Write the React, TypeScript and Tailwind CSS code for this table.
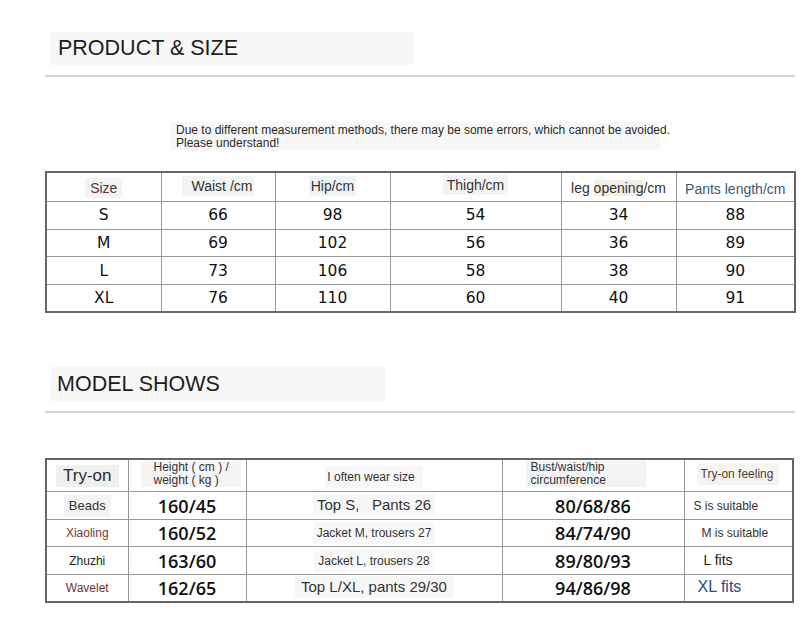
import React from "react";

const sans = { fontFamily: '"Liberation Sans", Arial, sans-serif' };

function Bg({ className = "", children }: { className?: string; children: React.ReactNode }) {
  return <span className={`inline-block ${className}`}>{children}</span>;
}

const sizeRows = [
  ["S", "66", "98", "54", "34", "88"],
  ["M", "69", "102", "56", "36", "89"],
  ["L", "73", "106", "58", "38", "90"],
  ["XL", "76", "110", "60", "40", "91"],
];

const numFont = { fontFamily: '"Open Sans", "Liberation Sans", sans-serif', fontWeight: 600, fontSize: 18 };

export default function App() {
  return (
    <div className="w-[802px] h-[637px] bg-white overflow-hidden text-[#222]" style={sans}>
      <div className="pl-[45px] pt-[32px]">
        {/* PRODUCT & SIZE */}
        <div className="ml-[5px] w-[363px] h-[33px] bg-[#f7f7f7] flex items-center pl-[8px] text-[21.5px] leading-none text-[#1e1e1e]">
          PRODUCT &amp; SIZE
        </div>
        <div className="mt-[10px] w-[750px] h-[2px] bg-[#d6d6d6]" />

        <div className="mt-[45px] ml-[125px] w-[490px] h-[28px] bg-[#f7f7f7] pl-[6px] pt-[2px] text-[12px] leading-[13px] text-[#2a2a2a] whitespace-nowrap">
          Due to different measurement methods, there may be some errors, which cannot be avoided.
          <br />
          Please understand!
        </div>

        {/* Size table */}
        <table className="mt-[21px] w-[749px] table-fixed border-collapse border-2 border-[#666]">
          <colgroup>
            <col className="w-[115px]" />
            <col className="w-[114px]" />
            <col className="w-[115px]" />
            <col className="w-[171px]" />
            <col className="w-[115px]" />
            <col className="w-[119px]" />
          </colgroup>
          <tbody>
            <tr className="h-[27.7px]">
              <td className="border border-[#999] text-center align-top pt-[3px]">
                <Bg className="bg-[#f5f4f4] px-[5px] text-[14px] leading-[20px] text-[#6a2c2c]">Size</Bg>
              </td>
              <td className="border border-[#999] text-center align-top pt-[1px]">
                <Bg className="bg-[#f2f5f2] pl-[10px] pr-[2px] text-[14px] leading-[20px] text-[#333]">Waist /cm</Bg>
              </td>
              <td className="border border-[#999] text-center align-top pt-[1px]">
                <Bg className="bg-[#eef3f8] px-[2px] text-[14px] leading-[20px] text-[#333]">Hip/cm</Bg>
              </td>
              <td className="border border-[#999] text-center align-top pt-[0px]">
                <Bg className="bg-[#f3f3f3] px-[4px] text-[14px] leading-[20px] text-[#333]">Thigh/cm</Bg>
              </td>
              <td className="border border-[#999] text-center align-top pt-[3px]">
                <span className="text-[14px] leading-[20px] text-[#333]">
                  leg <span className="bg-[#f1eee8]">opening</span>/cm
                </span>
              </td>
              <td className="border border-[#999] text-center align-top pt-[4px] whitespace-nowrap">
                <span className="text-[14px] leading-[20px] text-[#3a5583]">Pants length/cm</span>
              </td>
            </tr>
            {sizeRows.map((r, i) => (
              <tr key={i} className="h-[27.7px]">
                {r.map((c, j) => (
                  <td
                    key={j}
                    className="border border-[#999] text-center leading-[20px] text-[#111]"
                    style={{ fontFamily: '"DejaVu Sans", Verdana, sans-serif', fontSize: 15.5 }}
                  >
                    {c}
                  </td>
                ))}
              </tr>
            ))}
          </tbody>
        </table>

        {/* MODEL SHOWS */}
        <div className="mt-[54px] ml-[5px] w-[335px] h-[34px] bg-[#f7f7f7] flex items-center pl-[7px] text-[21.5px] leading-none text-[#1e1e1e]">
          MODEL SHOWS
        </div>
        <div className="mt-[10px] w-[750px] h-[2px] bg-[#d6d6d6]" />

        {/* Model table */}
        <table className="mt-[45px] w-[747px] table-fixed border-collapse border-2 border-[#666]">
          <colgroup>
            <col className="w-[82px]" />
            <col className="w-[118px]" />
            <col className="w-[256px]" />
            <col className="w-[182px]" />
            <col className="w-[109px]" />
          </colgroup>
          <tbody>
            <tr className="h-[28.5px]">
              <td className="border border-[#999] text-center">
                <Bg className="bg-[#eef0f0] px-[7px] text-[17px] leading-[22px] text-[#2a2a2a]">Try-on</Bg>
              </td>
              <td className="border border-[#999] align-top pt-[1px] pl-[12px]">
                <Bg className="bg-[#f5f5f5] pl-[13px] pr-[12px] text-[12px] leading-[13px] text-[#333] whitespace-nowrap">
                  Height ( cm ) /
                  <br />
                  weight ( kg )
                </Bg>
              </td>
              <td className="border border-[#999] text-center">
                <Bg className="bg-[#f7f7f7] pl-[2px] pr-[8px] text-[12px] leading-[22px] text-[#333]">I often wear size</Bg>
              </td>
              <td className="border border-[#999] align-top pt-[1px] pl-[23px]">
                <Bg className="bg-[#f2f4f4] pl-[5px] pr-[40px] text-[12px] leading-[13px] text-[#333] whitespace-nowrap">
                  Bust/waist/hip
                  <br />
                  circumference
                </Bg>
              </td>
              <td className="border border-[#999] align-top pt-[1px] pl-[12px]">
                <Bg className="bg-[#f6f4f1] pl-[4px] pr-[6px] text-[12px] leading-[22px] text-[#5a3a2c] whitespace-nowrap">Try-on feeling</Bg>
              </td>
            </tr>
            {[
              {
                name: "Beads",
                nameCls: "text-[13px] text-[#333] bg-[#f3f3f3] px-[5px]",
                hw: "160/45",
                wear: "Top S,\u00a0\u00a0\u00a0Pants 26",
                wearCls: "text-[15px] bg-[#f7f7f7] px-[4px]",
                bust: "80/68/86",
                feel: "S is suitable",
                feelCls: "text-[12px] text-[#333] pl-[9px]",
              },
              {
                name: "Xiaoling",
                nameCls: "text-[12px] text-[#7a3535]",
                hw: "160/52",
                wear: "Jacket M, trousers 27",
                wearCls: "text-[12px] bg-[#f8f8f8] px-[4px] -mt-[4px]",
                bust: "84/74/90",
                feel: "M is suitable",
                feelCls: "text-[12px] text-[#333] pl-[17px]",
              },
              {
                name: "Zhuzhi",
                nameCls: "text-[12px] text-[#222]",
                hw: "163/60",
                wear: "Jacket L, trousers 28",
                wearCls: "text-[12px] bg-[#f8f8f8] px-[4px]",
                bust: "89/80/93",
                feel: "L fits",
                feelCls: "text-[14px] text-[#222] pl-[19px]",
              },
              {
                name: "Wavelet",
                nameCls: "text-[12px] text-[#6b3535]",
                hw: "162/65",
                wear: "Top L/XL, pants 29/30",
                wearCls: "text-[15px] bg-[#f7f7f7] px-[6px]",
                bust: "94/86/98",
                feel: "XL fits",
                feelCls: "text-[16px] text-[#2d4a86] pl-[13px]",
              },
            ].map((r, i) => (
              <tr key={i} className="h-[27.6px]">
                <td className="border border-[#999] text-center pb-[2px]">
                  <Bg className={`leading-[22px] ${r.nameCls}`}>{r.name}</Bg>
                </td>
                <td className="border border-[#999] text-center leading-[22px] text-[#111]" style={numFont}>
                  {r.hw}
                </td>
                <td className="border border-[#999] text-center whitespace-nowrap pb-[2px]">
                  <Bg className={`leading-[22px] text-[#333] ${r.wearCls}`}>{r.wear}</Bg>
                </td>
                <td className="border border-[#999] text-center leading-[22px] text-[#111]" style={numFont}>
                  {r.bust}
                </td>
                <td className="border border-[#999] whitespace-nowrap pb-[2px]">
                  <span className={`leading-[22px] ${r.feelCls}`}>{r.feel}</span>
                </td>
              </tr>
            ))}
          </tbody>
        </table>
      </div>
    </div>
  );
}
